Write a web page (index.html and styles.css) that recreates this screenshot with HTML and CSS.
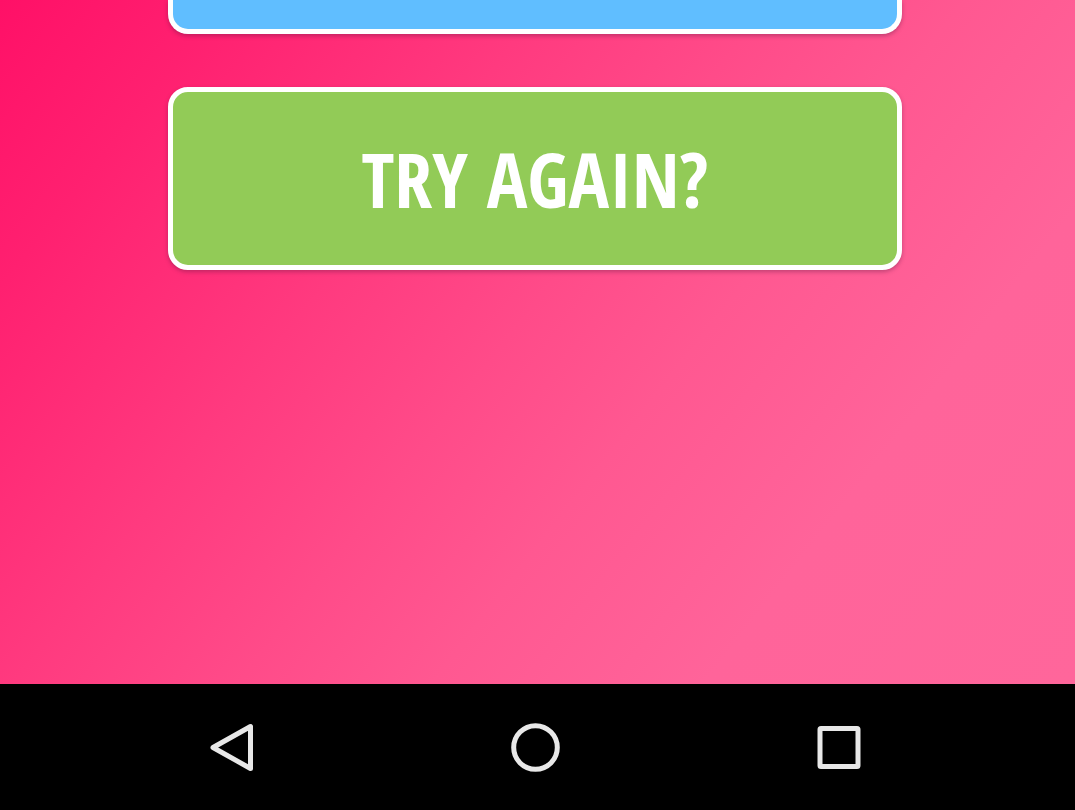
FILE: index.html
```html
<!DOCTYPE html>
<html lang="en">
<head>
<meta charset="utf-8">
<meta name="viewport" content="width=device-width, initial-scale=1">
<title>Try again?</title>
<link rel="stylesheet" href="styles.css">
</head>
<body>
<main class="screen">
  <button class="card card-blue" type="button" aria-label="Share"></button>
  <button class="card card-green" type="button">TRY AGAIN?</button>
</main>
<nav class="system-bar">
  <button class="nav-button" type="button" aria-label="Back">
    <svg class="nav-icon" viewBox="0 0 56 56"><path d="M9 28.500 46.500 7.500V49.500Z"/></svg>
  </button>
  <button class="nav-button" type="button" aria-label="Home">
    <svg class="nav-icon" viewBox="0 0 56 56"><circle cx="28.500" cy="28.500" r="21.800"/></svg>
  </button>
  <button class="nav-button" type="button" aria-label="Recent apps">
    <svg class="nav-icon" viewBox="0 0 56 56"><rect x="9" y="9.500" width="38" height="38" rx="1"/></svg>
  </button>
</nav>
</body>
</html>
```
FILE: styles.css
```css
* {
  box-sizing: border-box;
}

body {
  margin: 0;
  min-height: 100vh;
  display: flex;
  flex-direction: column;
  background: #000;
}

.screen {
  flex: 1;
  display: flex;
  flex-direction: column;
  gap: 53px;
  padding: 0 173px 0 168px;
  background: linear-gradient(128deg, #ff1067 0%, #ff2070 14%, #ff3a7f 34%, #ff4b89 48%, #ff5891 60%, #ff649a 77%, #ff669b 100%);
}

.card {
  width: 100%;
  margin: 0;
  border: 5px solid #fff;
  border-radius: 20px;
  box-shadow: 0 2px 4px rgba(80, 20, 60, 0.35);
  color: #fff;
  font: bold 76px "Open Sans Condensed", "Liberation Sans Narrow", "DejaVu Sans Condensed", sans-serif;
}

.card-blue {
  height: 34px;
  border-top: 0;
  border-radius: 0 0 20px 20px;
  background: #60beff;
}

.card-green {
  padding: 45px 16px;
  line-height: 83px;
  background: #92cb57;
}

.system-bar {
  display: grid;
  grid-template-columns: repeat(3, 1fr);
  padding: 35px 84px 35px 80px;
  background: #000;
}

.nav-button {
  display: flex;
  justify-content: center;
  padding: 0;
  border: 0;
  background: none;
}

.nav-icon {
  width: 56px;
  height: 56px;
  fill: none;
  stroke: #e8e8e8;
  stroke-width: 5;
  stroke-linejoin: round;
}
```
